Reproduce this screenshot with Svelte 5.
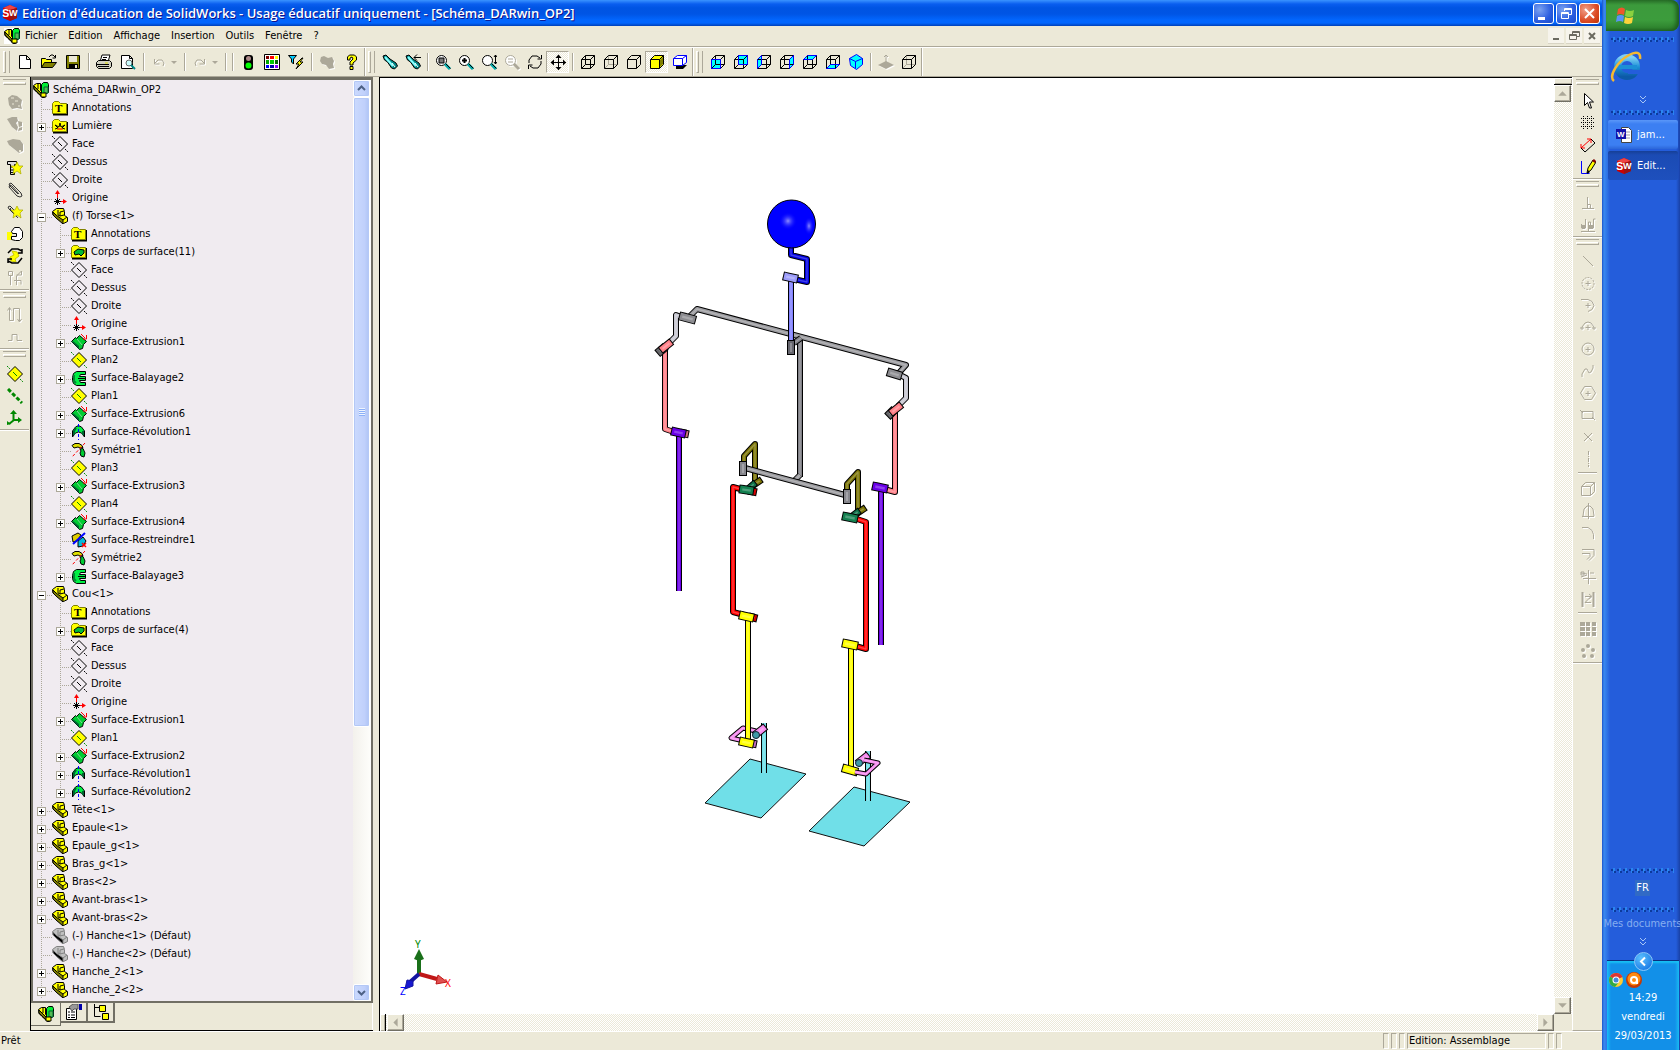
<script lang="ts">
	type Item = { label: string; icon: string; open?: boolean; children?: Item[]; expandable?: boolean };
	type Tool = { icon: string; label: string; off?: boolean; pressed?: boolean; sep?: boolean; drop?: boolean };
	type Tube = { c: string; w: number; p: string };

	const wire =
		'M1.5 5.5h9v9h-9zM5.5 1.5h9v9h-9zM1.5 5.5l4-4M10.5 5.5l4-4M10.5 14.5l4-4M1.5 14.5l4-4';
	const solid = 'M1.5 5.5h9v9h-9zM1.5 5.5l4-4h9v9l-4 4M10.5 5.5l4-4';
	const view = (face: string) =>
		`<path d="${face}" fill="#0ff"/><path d="${wire}" fill="none" stroke="#000"/><path d="${face}" fill="none" stroke="#00f"/>`;
	const lens = (inner: string, c = '#000', h = '#0aa') =>
		`<circle cx="6.5" cy="6.5" r="5" fill="#fff" stroke="${c}"/>${inner}<path d="M10 10l5 5" stroke="${h}" stroke-width="3"/><path d="M11 10l4.5 4.5" stroke="${c}"/>`;
	const plane = (fill: string, line: string) =>
		`<path d="M0 0l3 3M13 13l3 3" stroke="${line}" stroke-dasharray="2 1"/><path d="M8 .5L15.5 8L8 15.5L.5 8z" fill="${fill}" stroke="#000"/><path d="M6 6l4 4" stroke="${line}"/>`;
	const folder = (inner: string) =>
		`<path d="M1 14.5h14.5V4" fill="none" stroke="#000" stroke-width="2"/><path d="M.5 3.5l2-2h4l2 2h6v10H.5z" fill="#ff0" stroke="#808000"/>${inner}`;
	const torch = (extra: string) =>
		`<path d="M1 2l3-1 4 4 6 4 1.500 3-3 3-3-1-4-6-3-2z" fill="#088" stroke="#000"/><path d="M3 3l8 9" stroke="#8ff" stroke-width="2"/><path d="M10 9l3 4" stroke="#fff"/>${extra}`;
	const part = (a: string, b: string, k: string) =>
		`<path d="M.5 3.5l4-3h7l1 3v4l3 2v4l-4 2L4 9.5 1 6.5z" fill="${a}" stroke="${k}"/><path d="M1 4l3 3 7 5v4L4 10 1 7z" fill="${b}" stroke="${k}"/><path d="M6 2v5l2 1V4l4-1M8 8l4-1M11 12l4-3" fill="none" stroke="${k}"/>`;
	const assembly =
		'<path d="M.5 3.5l3-2h4v7l4 3v4h-2L4 10.5 1 7.5z" fill="#ff0" stroke="#000"/><path d="M1 4l2 2 7 7v2.5L4 10 1 7z" fill="#808000" stroke="#000"/><path d="M5 2v5" stroke="#000"/><path d="M8.5 2.5l2-2h4l1 2v8l-2 1h-5z" fill="#0e3" stroke="#000"/><path d="M11 5h4v6h-4z" fill="#5b5" stroke="#063"/><path d="M8 11h5v4H8z" fill="#ff0" stroke="#000"/>';
	const star =
		'<path d="M10 2l2 4h4l-3 3 1 5-4-3-4 3 1-5-3-3h4z" fill="#ff0" stroke="#aa0" stroke-width=".7"/>';
	const dim = (d: string, fill = 'none') => `<path d="${d}" fill="${fill}" stroke="#aca899"/>`;

	const icons: Record<string, string> = {
		sw: '<path d="M1 3l7-3 7 3v10l-7 3-7-3z" fill="#c00"/><path d="M8 0l7 3-7 2-7-2z" fill="#e44"/><path d="M8 5l7-2v10l-7 3z" fill="#911"/><text x="0" y="12" font-size="11" font-weight="700" font-family="Liberation Sans" fill="#fff">S</text><text x="7" y="11" font-size="9" font-weight="700" font-family="Liberation Sans" fill="#fff">W</text>',
		assembly,
		part: part('#ff0', '#808000', '#000'),
		partOff: part('#c0c0c0', '#000', '#808080'),
		note: folder('<text x="3" y="12" font-size="11" font-weight="700" font-family="Liberation Serif" fill="#000">T</text>'),
		light: folder('<path d="M3 11l3-1-3-3 4 2 1-4 1 4 4-2-3 3 3 1M4 8l2 2" fill="none" stroke="#000"/><path d="M5 12l1-2h4l1 2z" fill="#f60"/>'),
		bodies: folder('<path d="M3 8l4-3 6 1v3l-3 3-2-2-4 1z" fill="#0b3" stroke="#000"/>'),
		plane: plane('none', '#000'),
		plan: plane('#ff0', '#080'),
		origin: '<path d="M5.5 11V2M5 11.5h8" stroke="#f00"/><path d="M3 4l2.5-4L8 4zM11 9l4 2.5-4 2.5z" fill="#f00"/><path d="M3 9l5 5M8 9l-5 5M5.5 8v7M2 11.5h7" stroke="#000"/>',
		extrude: '<path d="M.5 7.5l4-4 1 1 3-3 7 6-3 3-1 4-3 1z" fill="#0c3" stroke="#000"/><path d="M1 8l7 7v-3L2 7z" fill="#063"/><path d="M6 5l5 6" stroke="#8c9"/><path d="M10 0l4 4M12 5h3.5V1" fill="none" stroke="#f00"/>',
		sweep: '<path d="M14.5 1.5H5.5l-3 2-1 4v3l1 3 3 2h9v-3h-5l-1-2h6v-4h-6l1-2h5z" fill="#0e4" stroke="#000"/><path d="M3 5v6l2 2" fill="none" stroke="#083" stroke-width="2"/><path d="M7 8.500h8" stroke="#000"/>',
		revolve: '<path d="M1.5 13V7l3-4 3-1.500 3 1.500 3 4v6l-3-4-3-1-3 1z" fill="#0e4" stroke="#000"/><path d="M3 11V7l2-3M12 11V7" fill="none" stroke="#063" stroke-width="2"/><path d="M7.5 0v16" stroke="#00f" stroke-dasharray="3 2"/>',
		mirror: '<path d="M1 3.5l3-2h4l3 2 1 2-3 .5-2-1-4 1z" fill="#dd0" stroke="#000"/><path d="M9 7l3-.5 2 4.500-1 4-3-1-1-3 1-2z" fill="#0c3" stroke="#000"/><path d="M14 1L1 15" stroke="#f00" stroke-dasharray="3 2"/>',
		trim: '<path d="M1 4l6-3 3 2-4 6-4 1z" fill="#dc0" stroke="#000"/><path d="M7 9l5-4 3 4-3 5-5 1z" fill="#0bd" stroke="#000"/><path d="M2 12L14 1" stroke="#00f" stroke-width="2"/><path d="M11 11l4 4M15 11l-4 4" stroke="#f00" stroke-width="1.5"/>',
		new: '<path d="M2.5 1.5h7l4 4v9h-11zM9.5 1.5v4h4" fill="#fff" stroke="#000"/>',
		open: '<path d="M.5 13.5v-9h4l1 1h5v3" fill="#ff0" stroke="#000"/><path d="M.5 13.5l3-5h12l-4 5z" fill="#808000" stroke="#000"/><path d="M8 3l2-2h2l2 2M14.5 1v3h-3" fill="none" stroke="#000"/>',
		save: '<path d="M1.5 1.5h13v13h-13z" fill="#808000" stroke="#000"/><path d="M4 2h8v6H4z" fill="#ece9d8"/><path d="M4 10h9v4H4z" fill="#000"/><path d="M10 11h2v3h-2z" fill="#ece9d8"/>',
		print: '<path d="M4 8l2-7h8l-2 7z" fill="#fff" stroke="#000"/><path d="M.5 8.5l2-2h11l2 2v4l-2 2h-11l-2-2z" fill="#d0d0c0" stroke="#000"/><path d="M1 10.5h12M2 12.5h11M7 3.5h4M6 5.5h4" stroke="#000"/><path d="M9 9h3" stroke="#dd0"/>',
		preview: '<path d="M1.5 1.5h8l3 3v10h-11zM9.5 1.5v3h3" fill="#fff" stroke="#000"/><circle cx="9" cy="9" r="3" fill="#cff" stroke="#666"/><path d="M11 11l4 4" stroke="#088" stroke-width="2"/>',
		undo: dim('M3.5 5v5h5M4 9l3-3h4l2 3-1 3'),
		redo: dim('M12.5 5v5h-5M12 9L9 6H5L3 9l1 3'),
		rebuild: '<rect x="4" y="1" width="9" height="15" rx="3" fill="#000"/><circle cx="8.5" cy="4.5" r="2.500" fill="#a88"/><circle cx="8.5" cy="11.5" r="3" fill="#0f0"/>',
		palette: '<path d="M.5.5h15v15H.5z" fill="#fff" stroke="#000"/><path d="M2 2h3v3H2z" fill="#800000"/><path d="M6 2h4v3H6z" fill="#f00"/><path d="M11 2h3v3h-3z" fill="#ff0"/><path d="M2 6h3v4H2z" fill="#0a0"/><path d="M6 6h4v4H6z" fill="#0c0"/><path d="M11 6h3v4h-3z" fill="#060"/><path d="M2 11h3v3H2z" fill="#00f"/><path d="M6 11h4v3H6z" fill="#00a"/><path d="M11 11h3v3h-3z" fill="#80f"/>',
		filter: '<path d="M.5 1.5h8L5.5 5v5l-2-2V5z" fill="#0cf" stroke="#000"/><path d="M14 4l-6 6h3l-3 5 7-7h-3l3-4z" fill="#ff0" stroke="#000"/>',
		blob: '<path d="M2 3l3-1 4 2 4-1 2 4-1 3 1 4-5 1-3-4-4-1-2-3z" fill="#aca899"/>',
		help: '<path d="M4.5 6V3l2-2h5l2 2v3L10 9v2H7V8l3-3-1-2-2 1v2z" fill="#ff0" stroke="#000"/><path d="M7 12.5h3v3H7z" fill="#ff0" stroke="#000"/>',
		torch: torch(''),
		torchBack: torch('<path d="M9 3.500h7M12 .5l-3 3 3 3" stroke="#000" fill="none"/>'),
		zoomFit: lens('<path d="M4 4h5v5H4z" fill="#777" stroke="#000"/>'),
		zoomArea: lens('<path d="M4 6.5h5M6.5 4v5" stroke="#000" stroke-width="2"/>'),
		zoomDrag: lens('<path d="M14.5 1v9M13 3l1.500-2L16 3M13 8l1.500 2L16 8" fill="none" stroke="#000"/>'),
		zoomSel: lens('<path d="M4 5h5M4 8h5" stroke="#aca899"/>', '#aca899', '#aca899'),
		rotate: '<path d="M2 9V6l3-4h5l3 2M14 7v3l-3 4H6l-3-2" fill="none" stroke="#000"/><path d="M14.5 1v4h-4M1.5 15v-4h4" fill="none" stroke="#000"/>',
		pan: '<path d="M8.5 1v15M1 8.5h15" stroke="#000"/><path d="M5.5 4l3-3.5 3 3.5zM5.5 13l3 3 3-3zM4 5.5L.5 8.5l3.500 3zM13 5.5l3 3-3 3z" fill="#000"/>',
		wire: `<path d="${wire}" fill="none" stroke="#000"/>`,
		hidden: `<path d="${wire}" fill="none" stroke="#aca899"/><path d="${solid}" fill="none" stroke="#000"/>`,
		solid: `<path d="${solid}" fill="none" stroke="#000"/>`,
		shaded: `<path d="${solid}" fill="#ff0" stroke="#000"/><path d="M11 6l3-3v7l-3 3z" fill="#808000"/>`,
		shadow: '<path d="M4 11h11l-4 4H4z" fill="#000"/><path d="M1.5 4.5l4-3h9v7l-4 3h-9z" fill="#fff" stroke="#00f"/><path d="M1.5 4.5h9v7M10.5 4.5l4-3" fill="none" stroke="#00f"/>',
		front: view('M1.5 5.5h9v9h-9z'),
		back: view('M5.5 1.5h9v9h-9z'),
		left: view('M1.5 5.5l4-4v9l-4 4z'),
		right: view('M10.5 5.5l4-4v9l-4 4z'),
		top: view('M1.5 5.5l4-4h9l-4 4z'),
		bottom: view('M1.5 14.5l4-4h9l-4 4z'),
		iso: '<path d="M1.5 4.5l7-4 6 4v6l-6 5-6-4z" fill="#0ff" stroke="#00f"/><path d="M1.5 4.5l6 3 7-3M7.5 7.5v7" fill="none" stroke="#00f"/>',
		normal: '<path d="M0 11l8-4 8 4-8 4z" fill="#aca899"/><path d="M8 8V1M6 3l2-2 2 2" fill="none" stroke="#aca899"/>',
		insert: '<path d="M1 4l4-3 5 1 5 4-1 5 1 4-5-1-5 1-3-4z" fill="#aca899"/><path d="M4 4h3M8 7h3M5 10h2M11 12h2" stroke="#ece9d8"/>',
		hideComp: '<path d="M0 3l5-2h5l1 4-2 2 2 4-1 4-5-4zM11 5l4 1v4l-3 1zM12 12l3-1v3l-4 1z" fill="#aca899"/>',
		editComp: '<path d="M0 3l6-2 7 1 3 4v7l-4 2L2 7z" fill="#aca899"/><path d="M12 12h2v2h-2z" fill="#ece9d8"/>',
		screw: '<path d="M.5 1.5h9v3h-2v10h-4v-10h-3zM3 7h5M3 10h5M3 12.5h5" fill="#ddd" stroke="#000"/>' + star,
		clip: '<path d="M11 12L3 4 2 2 4 1 14 11l1 3-2 1-3-1-8-9 1-2 2 1 7 8" fill="none" stroke="#333"/>',
		clipStar: '<path d="M10 13L2 5 1 3l2-1 8 8M5 3L3 5l8 9" fill="none" stroke="#333"/>' + star,
		move: '<path d="M0 6h5v8H0z" fill="#ff0"/><path d="M4.5 5.5l3-4h5l3 4v6l-3 3h-4l-4-1v-3h5v-3h-4z" fill="#fff" stroke="#000"/>',
		turn: '<path d="M5 3l5 1 2 4-4 3 1 3-5-1-1-4 4-2z" fill="#ff0" stroke="#cc0"/><path d="M1 5l4-4h6l4 2M15 1v4h-4M15 10l-4 5H5l-4-2M1 15v-4h4" fill="none" stroke="#000" stroke-width="1.500"/>',
		explode: dim('M1.5 1.5h4v4h-4zM3.5 5v10M9.5 15V6l5-5v4h-5M7 10.5h7v4'),
		smart: dim('M2.5 1v12.500h4v-12h6v13M.5 3.500l2-3 2 3M10.500 12l2 3 2-3'),
		pulse: dim('M1 11.5h4v-6h5v6h5'),
		axis: '<path d="M1 1l14 14" stroke="#080" stroke-width="3" stroke-dasharray="4 2"/>',
		coords: '<path d="M6.5 2v8h6M7 10l-5 4" fill="none" stroke="#080" stroke-width="2"/><path d="M3 4l3.500-4L10 4zM11 7l4 3-4 3zM0 15v-4l4 3z" fill="#080"/>',
		arrow: '<path d="M4.5.5v12l3-3 2 5.500h2l-2-6h4z" fill="#fff" stroke="#000"/>',
		grid: '<path d="M1 3.5h14M1 7.5h14M1 11.5h14M3.5 1v14M7.5 1v14M11.5 1v14" stroke="#000" stroke-dasharray="1 1"/>',
		dimension: '<path d="M1 11L11 2M1 7v4h4M7 2h4v4" fill="none" stroke="#f00"/><path d="M1 11l4 4L15 6l-4-4" fill="none" stroke="#000"/>',
		sketch: '<path d="M1.5 2v12.500h8" fill="none" stroke="#00f"/><path d="M7 14l1-5 5-8 3 2-5 8z" fill="#ff0" stroke="#000"/><path d="M12 2l3 2 1-2-2-2z" fill="#800"/><path d="M7 15l1-4 2 2z" fill="#000"/>',
		perp: dim('M2 13.5h12M7.5 2v11M7.5 9.5h3v4'),
		relations: dim('M5.500 2v9h-4V7M1 14.5h14M8.5 14V5h2v6h3V2h2') + '<path d="M2 8h3v4H2zM9 8h4v4H9z" fill="#aca899"/>',
		line: dim('M3 3l10 10'),
		arcDots: dim('M8 6v5M5.5 8.5h5') + '<circle cx="8" cy="8.5" r="6" fill="none" stroke="#aca899" stroke-dasharray="2 1"/>',
		tangent: dim('M1 2.5h7l4 2 2 4-2 4-4 2M8 6v5M5.5 8.5h5'),
		arc: dim('M2 11V8l3-4 3-1 3 1 3 4v3M8 6v5M5.5 8.5h5M0 9h4M12 9h4'),
		circle: '<circle cx="8" cy="8" r="6" fill="none" stroke="#aca899"/>' + dim('M8 6v5M5.5 8.5h5'),
		spline: dim('M2 14v-3l3-5 2 0 2 4 2-1 2-4V2'),
		hexagon: dim('M4.5 1.5h7l4 6.500-4 6.500h-7L.5 8zM8 6v5M5.5 8.5h5'),
		rect: dim('M2 4.5h11v7H2zM0 3l3 3M12 10l3 3'),
		point: dim('M4 4l8 8M12 4l-8 8'),
		center: '<path d="M8.5 0v16" stroke="#aca899" stroke-dasharray="4 1 1 1"/>',
		convert: dim(solid),
		revolved: dim('M8.5 0v16M2 13.5h12M3 13l1-7 3-3h3l3 3 1 7'),
		fillet: dim('M2 2.5h6l4 3 1.500 4V14'),
		offset: dim('M2 2.5h12v6l-5 5M2 6.5h8v3l-3 3'),
		cut: dim('M1 4l6 1M1 8l6-2M8.5 1v14M3 9.5h13M10 4h4M1 3h3v3H1z'),
		mirrorSk: '<path d="M2.500 1v15M13.500 1v15" stroke="#aca899" stroke-width="2"/>' + dim('M5 5.500h6l-6 6h6M9 3l3 2.500L9 8'),
		pattern: '<path d="M0 1h5v4H0zM6 1h4v4H6zM12 1h4v4h-4zM0 6h5v4H0zM6 6h4v4H6zM12 6h4v4h-4zM0 11h5v4H0zM6 11h4v4H6zM12 11h4v4h-4z" fill="#aca899"/>',
		circular: '<g fill="#aca899"><circle cx="8" cy="3" r="2"/><circle cx="3" cy="7" r="2"/><circle cx="13" cy="7" r="2"/><circle cx="4" cy="13" r="2"/><circle cx="12" cy="13" r="2"/></g>',
		props: '<path d="M.5 4.5h10v11H.5zM2 8h2M5 8h4M2 11h2M5 11h4M2 13.5h2M5 13.5h4" fill="#fff" stroke="#000"/><path d="M3 3l4-3h5v5H8L6 7z" fill="#999" stroke="#555"/><path d="M13 0h3v6h-3z" fill="#00a"/>',
		config: '<path d="M1.5 0v12.500h6M2 3.5h4" fill="none" stroke="#000"/><path d="M6.500 1.5h6v6h-6zM9.500 9.5h6v6h-6z" fill="#ff0" stroke="#000"/>',
		word: '<path d="M5.5.5h7l3 3v12h-10z" fill="#fff" stroke="#444"/><path d="M9 5h5M9 8h5M9 11h5" stroke="#99a"/><path d="M0 2h10v10H0z" fill="#11a"/><text x="1" y="10" font-size="8" font-weight="700" font-family="Liberation Sans" fill="#fff">W</text>'
	};

	const menus = ['Fichier', 'Edition', 'Affichage', 'Insertion', 'Outils', 'Fenêtre', '?'];

	const t = (icon: string, label: string, extra: Partial<Tool> = {}): Tool => ({ icon, label, ...extra });
	const sep = t('', '', { sep: true });
	const off = { off: true };

	const bars: Tool[][] = [
		[
			t('new', 'Nouveau'), t('open', 'Ouvrir'), t('save', 'Enregistrer'), sep,
			t('print', 'Imprimer'), t('preview', 'Aperçu'), sep,
			t('undo', 'Annuler', { off: true, drop: true }), sep,
			t('redo', 'Rétablir', { off: true, drop: true }), sep, sep,
			t('rebuild', 'Reconstruire'), t('palette', 'Couleur'), t('filter', 'Filtre'), sep,
			t('blob', 'Texture', off), t('help', 'Aide')
		],
		[
			t('torch', 'Orientation'), t('torchBack', 'Vue précédente'), sep,
			t('zoomFit', 'Zoom au mieux'), t('zoomArea', 'Zoom fenêtre'), t('zoomDrag', 'Zoom avant/arrière'),
			t('zoomSel', 'Zoom sur la sélection', off), t('rotate', 'Rotation'), t('pan', 'Translation', { pressed: true }), sep,
			t('wire', 'Image filaire'), t('hidden', 'Lignes cachées apparentes'), t('solid', 'Lignes cachées supprimées'),
			t('shaded', 'Image ombrée', { pressed: true }), t('shadow', 'Ombres')
		],
		[
			t('front', 'Face'), t('back', 'Arrière'), t('left', 'Gauche'), t('right', 'Droite'), t('top', 'Dessus'),
			t('bottom', 'Dessous'), t('iso', 'Isométrique'), sep, t('normal', 'Normal à', off), t('hidden', 'Dimétrique')
		]
	];

	const leftBars: Tool[][] = [
		[
			t('insert', 'Insérer des composants', off), t('hideComp', 'Cacher', off), t('editComp', 'Editer', off),
			t('screw', 'Visserie'), t('clip', 'Contrainte'), t('clipStar', 'Contraintes intelligentes'),
			t('move', 'Déplacer'), t('turn', 'Tourner'), t('explode', 'Vue éclatée', off)
		],
		[t('smart', 'Esquisse éclatée', off), t('pulse', 'Ligne décalée', off)],
		[t('plan', 'Plan'), t('axis', 'Axe'), t('coords', 'Système de coordonnées')]
	];

	const rightBars: Tool[][] = [
		[t('arrow', 'Sélectionner'), t('grid', 'Grille'), t('dimension', 'Cotation'), t('sketch', 'Esquisse')],
		[t('perp', 'Ajouter une relation', off), t('relations', 'Afficher les relations', off)],
		[
			t('line', 'Ligne', off), t('arcDots', 'Arc par son centre', off), t('tangent', 'Arc tangent', off),
			t('arc', 'Arc par 3 points', off), t('circle', 'Cercle', off), t('spline', 'Spline', off),
			t('hexagon', 'Polygone', off), t('rect', 'Rectangle', off), t('point', 'Point', off),
			t('center', 'Ligne de construction', off), sep,
			t('convert', 'Convertir', off), t('revolved', 'Symétrie', off), t('fillet', 'Congé', off),
			t('offset', 'Décaler', off), t('cut', 'Ajuster', off), t('mirrorSk', 'Miroir', off), sep,
			t('pattern', 'Répétition linéaire', off), t('circular', 'Répétition circulaire', off)
		]
	];

	const n = (label: string, icon: string, expandable = false): Item => ({ label, icon, expandable });
	const planes = () => [n('Face', 'plane'), n('Dessus', 'plane'), n('Droite', 'plane'), n('Origine', 'origin')];

	let tree: Item[] = $state([
		n('Annotations', 'note'),
		n('Lumière', 'light', true),
		...planes(),
		{
			label: '(f) Torse<1>', icon: 'part', expandable: true, open: true,
			children: [
				n('Annotations', 'note'), n('Corps de surface(11)', 'bodies', true), ...planes(),
				n('Surface-Extrusion1', 'extrude', true), n('Plan2', 'plan'),
				n('Surface-Balayage2', 'sweep', true), n('Plan1', 'plan'),
				n('Surface-Extrusion6', 'extrude', true), n('Surface-Révolution1', 'revolve', true),
				n('Symétrie1', 'mirror'), n('Plan3', 'plan'),
				n('Surface-Extrusion3', 'extrude', true), n('Plan4', 'plan'),
				n('Surface-Extrusion4', 'extrude', true), n('Surface-Restreindre1', 'trim'),
				n('Symétrie2', 'mirror'), n('Surface-Balayage3', 'sweep', true)
			]
		},
		{
			label: 'Cou<1>', icon: 'part', expandable: true, open: true,
			children: [
				n('Annotations', 'note'), n('Corps de surface(4)', 'bodies', true), ...planes(),
				n('Surface-Extrusion1', 'extrude', true), n('Plan1', 'plan'),
				n('Surface-Extrusion2', 'extrude', true), n('Surface-Révolution1', 'revolve', true),
				n('Surface-Révolution2', 'revolve', true)
			]
		},
		n('Tête<1>', 'part', true), n('Epaule<1>', 'part', true), n('Epaule_g<1>', 'part', true),
		n('Bras_g<1>', 'part', true), n('Bras<2>', 'part', true),
		n('Avant-bras<1>', 'part', true), n('Avant-bras<2>', 'part', true),
		n('(-) Hanche<1> (Défaut)', 'partOff'), n('(-) Hanche<2> (Défaut)', 'partOff'),
		n('Hanche_2<1>', 'part', true), n('Hanche_2<2>', 'part', true)
	]);

	const feet = ['750,759 806,774 761,818 705,803', '854,787 910,802 864,846 809,831'];

	// drawn back to front; widths of 5 and more are the joint cylinders
	const tubes: Tube[] = [
		// torso
		{ c: '#808086', w: 4, p: '800,338 800,477' },
		{ c: '#9a9a9e', w: 4, p: '688,318 697,309 906,365 898,374' },
		{ c: '#808086', w: 4, p: '801,338 794,343' },
		{ c: '#9a9a9e', w: 4, p: '800,475 794,481' },
		// neck and head
		{ c: '#0000e0', w: 4, p: '791,247 791,255 807,259 807,282 794,279' },
		{ c: '#8080ff', w: 4, p: '791,280 791,343' },
		{ c: '#9c9cfa', w: 7, p: '784,276 797,279' },
		{ c: '#66666e', w: 6, p: '791,341 791,354' },
		// left arm
		{ c: '#c6c6d0', w: 4, p: '684,318 676,315 676,336 667,345' },
		{ c: '#8c8c90', w: 7, p: '680,316 695,320' },
		{ c: '#ff8088', w: 4, p: '665,350 665,429 674,432' },
		{ c: '#66666a', w: 7, p: '665,347 658,353' },
		{ c: '#ff8088', w: 6, p: '671,342 661,350' },
		{ c: '#6a00e8', w: 4, p: '679,435 679,591' },
		{ c: '#d07080', w: 6, p: '682,433 687,434' },
		{ c: '#6a00e8', w: 7, p: '672,431 685,434' },
		// right arm
		{ c: '#c6c6d0', w: 4, p: '898,374 906,378 906,398 898,406' },
		{ c: '#8c8c90', w: 7, p: '888,372 901,376' },
		{ c: '#ff8088', w: 4, p: '895,410 895,492 884,489' },
		{ c: '#66666a', w: 7, p: '894,410 888,416' },
		{ c: '#ff8088', w: 6, p: '901,405 891,413' },
		{ c: '#6a00e8', w: 4, p: '881,490 881,645' },
		{ c: '#6a00e8', w: 7, p: '873,486 887,489' },
		// hips
		{ c: '#7b7405', w: 4, p: '755,484 755,444 744,456 744,465' },
		{ c: '#7b7405', w: 5, p: '752,486 761,480' },
		{ c: '#7b7405', w: 4, p: '858,512 858,472 847,484 847,494' },
		{ c: '#7b7405', w: 5, p: '856,514 865,508' },
		{ c: '#9a9a9e', w: 4, p: '745,468 845,495' },
		{ c: '#86868c', w: 6, p: '743,462 743,475' },
		{ c: '#86868c', w: 6, p: '847,490 847,503' },
		{ c: '#0e7048', w: 5, p: '748,489 755,483' },
		{ c: '#0e7048', w: 5, p: '851,517 859,511' },
		// legs
		{ c: '#f00', w: 4, p: '744,490 733,487 733,612 744,615' },
		{ c: '#d00000', w: 6, p: '750,491 755,492' },
		{ c: '#148050', w: 7, p: '740,489 753,491' },
		{ c: '#f00', w: 4, p: '854,518 866,522 866,649 852,645' },
		{ c: '#148050', w: 7, p: '843,516 857,519' },
		{ c: '#ff0', w: 4, p: '748,618 748,742' },
		{ c: '#d00000', w: 6, p: '751,617 755,618' },
		{ c: '#ff0', w: 7, p: '740,615 753,618' },
		{ c: '#ff0', w: 4, p: '851,646 851,769' },
		{ c: '#ff0', w: 7, p: '843,643 857,646' },
		// ankles
		{ c: '#70dfe8', w: 4, p: '764,723 764,773' },
		{ c: '#f78cf0', w: 3, p: '756,731 743,728 731,738 744,741' },
		{ c: '#ff0', w: 4, p: '748,724 748,742' },
		{ c: '#f78cf0', w: 6, p: '755,735 765,727' },
		{ c: '#c070c0', w: 6, p: '750,743 755,744' },
		{ c: '#ff0', w: 7, p: '740,741 753,744' },
		{ c: '#70dfe8', w: 4, p: '868,751 868,801' },
		{ c: '#ff0', w: 7, p: '843,768 857,772' },
		{ c: '#f78cf0', w: 6, p: '858,763 868,755' },
		{ c: '#f78cf0', w: 3, p: '855,772 866,774 878,763 864,760' }
	];

	// pull both ends of a cylinder in, so that its square caps end on the given points
	function body(tube: Tube) {
		if (tube.w < 5) return tube.p;
		const [x1, y1, x2, y2] = tube.p.split(/[ ,]/).map(Number);
		const length = Math.hypot(x2 - x1, y2 - y1);
		const cut = Math.min(tube.w / 2, length / 2 - 0.5) / length;
		const dx = (x2 - x1) * cut;
		const dy = (y2 - y1) * cut;
		return `${x1 + dx},${y1 + dy} ${x2 - dx},${y2 - dy}`;
	}
</script>

{#snippet icon(name: string)}
	<svg class="icon" viewBox="0 0 16 16" aria-hidden="true">{@html icons[name]}</svg>
{/snippet}

{#snippet toolbar(tools: Tool[], cls: string)}
	<div class="bar {cls}" role="toolbar">
		<span class="grip"></span>
		{#each tools as tool}
			{#if tool.sep}
				<span class="sep"></span>
			{:else}
				<button class="tool" class:off={tool.off} class:pressed={tool.pressed} class:drop={tool.drop} aria-label={tool.label}>
					{@render icon(tool.icon)}
					{#if tool.drop}<span class="caret"></span>{/if}
				</button>
			{/if}
		{/each}
	</div>
{/snippet}

{#snippet branch(items: Item[], depth: number)}
	{#each items as item, i}
		<li>
			<div class="row">
				{#if depth > 1}<span class="guide"></span>{/if}
				<span class="guide stub" class:last={depth > 1 && i === items.length - 1}>
					{#if item.expandable}
						<button class="toggle" class:open={item.open} aria-label="Développer {item.label}" onclick={() => (item.open = !item.open)}></button>
					{/if}
				</span>
				{@render icon(item.icon)}
				<span class="label">{item.label}</span>
			</div>
			{#if item.open && item.children}
				<ul>{@render branch(item.children, depth + 1)}</ul>
			{/if}
		</li>
	{/each}
{/snippet}

{#snippet chevrons()}
	<svg class="chevrons" viewBox="0 0 8 9" aria-hidden="true"><path d="M1 1l3 3 3-3M1 5l3 3 3-3" /></svg>
{/snippet}

<div class="desktop">
	<div class="window">
		<header class="title">
			{@render icon('sw')}
			<h1>Edition d'éducation de SolidWorks - Usage éducatif uniquement - [Schéma_DARwin_OP2]</h1>
			<button class="cap" aria-label="Réduire"><svg viewBox="0 0 19 19"><path d="M4 13h7v3H4z" fill="#fff" /></svg></button>
			<button class="cap" aria-label="Restaurer"><svg viewBox="0 0 19 19"><path d="M7.500 7V4.500h7v6H12M4.500 8.500h7v6h-7zM7 5.500h8M4 9.500h8" fill="none" stroke="#fff" /></svg></button>
			<button class="cap close" aria-label="Fermer"><svg viewBox="0 0 19 19"><path d="M5 5l9 9M14 5l-9 9" stroke="#fff" stroke-width="2" /></svg></button>
		</header>

		<nav class="menu">
			<span class="doc">{@render icon('assembly')}</span>
			{#each menus as menu}<button>{menu}</button>{/each}
			<span class="fill"></span>
			<button class="mdi" aria-label="Réduire le document"><svg viewBox="0 0 16 16"><path d="M5 10h6v2H5z" fill="#6b6a60" /></svg></button>
			<button class="mdi" aria-label="Restaurer le document"><svg viewBox="0 0 16 16"><path d="M6.500 6V3.500h7v5H11M6 4.500h8M3.500 6.500h7v5h-7zM3 7.500h8" fill="none" stroke="#6b6a60" /></svg></button>
			<button class="mdi" aria-label="Fermer le document"><svg viewBox="0 0 16 16"><path d="M5 5l6 6M11 5l-6 6" stroke="#6b6a60" stroke-width="2" /></svg></button>
		</nav>

		<div class="toolbars">
			{#each bars as bar}{@render toolbar(bar, 'h')}{/each}
		</div>

		<main>
			<aside class="side">
				{#each leftBars as bar}{@render toolbar(bar, 'v')}{/each}
			</aside>

			<section class="pane">
				<div class="tree-box">
					<div class="tree">
						<div class="row root">{@render icon('assembly')}<span class="label">Schéma_DARwin_OP2</span></div>
						<ul>{@render branch(tree, 1)}</ul>
					</div>
					<div class="xp-scroll">
						<button aria-label="Défiler vers le haut"><svg viewBox="0 0 15 15"><path d="M4 9l3.500-3.500L11 9" /></svg></button>
						<div class="track"><div class="thumb"></div></div>
						<button aria-label="Défiler vers le bas"><svg viewBox="0 0 15 15"><path d="M4 6l3.500 3.500L11 6" /></svg></button>
					</div>
				</div>
				<div class="tabs">
					<button class="active" aria-label="Arbre de création">{@render icon('assembly')}</button>
					<button aria-label="Propriétés">{@render icon('props')}</button>
					<button aria-label="Configurations">{@render icon('config')}</button>
				</div>
			</section>

			<section class="viewport">
				<svg class="scene" viewBox="380 78 1174 936" preserveAspectRatio="xMinYMin meet" role="img" aria-label="Schéma du robot">
					<defs>
						<radialGradient id="shine"><stop offset="0" stop-color="#8c8cff" /><stop offset="1" stop-color="#00f" stop-opacity="0" /></radialGradient>
					</defs>
					{#each feet as foot}<polygon points={foot} fill="#70dfe8" stroke="#111" />{/each}
					{#each tubes as tube}
						<g class:joint={tube.w >= 5}>
							<polyline points={body(tube)} stroke="#000" stroke-width={tube.w + 2} />
							<polyline points={body(tube)} stroke={tube.c} stroke-width={tube.w} />
							<polyline points={body(tube)} stroke="#fff" stroke-opacity=".25" stroke-width={tube.w / 3} />
						</g>
					{/each}
					<circle cx="756" cy="735" r="3.500" fill="#3f9aa6" stroke="#123" />
					<circle cx="859" cy="763" r="3.500" fill="#3f9aa6" stroke="#123" />
					<circle cx="791.500" cy="224" r="24" fill="#00f" stroke="#000" />
					<circle cx="788" cy="221" r="9" fill="url(#shine)" />
					<ellipse cx="809" cy="226" rx="5" ry="9" fill="url(#shine)" />

					<g class="triad">
						<path d="M419 974V956" stroke="#1a701a" stroke-width="4" />
						<path d="M414 959l5-10 5 10-5 2z" fill="#1a701a" />
						<path d="M419 974l18 5" stroke="#c01818" stroke-width="4" />
						<path d="M438 975l9 7-11 2z" fill="#e05050" stroke="#c01818" />
						<path d="M419 974l-9 8" stroke="#1414a0" stroke-width="4" />
						<path d="M407 980l6 1 0 5-8 3z" fill="#1818d0" stroke="#1414a0" />
						<text x="415" y="948" fill="#080">Y</text>
						<text x="445" y="987" fill="#f00">X</text>
						<text x="400" y="995" fill="#00f">Z</text>
					</g>
				</svg>
				<div class="scroll vert">
					<span class="split"></span>
					<button aria-label="Haut"><svg viewBox="0 0 14 14"><path d="M3 9l4-4 4 4z" /></svg></button>
					<span class="fill"></span>
					<button aria-label="Bas"><svg viewBox="0 0 14 14"><path d="M3 5l4 4 4-4z" /></svg></button>
				</div>
				<div class="scroll horiz">
					<span class="split"></span>
					<button aria-label="Gauche"><svg viewBox="0 0 14 14"><path d="M9 3L5 7l4 4z" /></svg></button>
					<span class="fill"></span>
					<button aria-label="Droite"><svg viewBox="0 0 14 14"><path d="M5 3l4 4-4 4z" /></svg></button>
				</div>
			</section>

			<aside class="side right">
				{#each rightBars as bar}{@render toolbar(bar, 'v')}{/each}
			</aside>
		</main>

		<footer>
			<span>Prêt</span>
			<span class="fill"></span>
			<span class="cell"></span><span class="cell"></span><span class="cell"></span>
			<span class="cell wide">Edition: Assemblage</span>
			<span class="cell"></span><span class="cell"></span>
		</footer>
	</div>

	<aside class="taskbar">
		<button class="start" aria-label="Démarrer">
			<svg viewBox="0 0 20 18">
				<path d="M2 2q4-3 7 0L8 8q-4-2-7 0z" fill="#f0562b" /><path d="M10 3q4 2 8 0l-1 6q-4 2-8 0z" fill="#8bd13f" />
				<path d="M1 9q4-2 7 0l-1 6q-3-2-7 0z" fill="#5b93f5" /><path d="M9 10q4 2 8 0l-1 6q-4 2-8 0z" fill="#fbd33a" />
			</svg>
		</button>
		<span class="dots"></span>
		<a class="ie" href="#ie" aria-label="Internet Explorer">
			<svg viewBox="0 0 32 32">
				<defs><linearGradient id="ieblue" x2="0" y2="1"><stop offset="0" stop-color="#7fd0f5" /><stop offset=".5" stop-color="#1c8fd6" /><stop offset="1" stop-color="#0c5aa8" /></linearGradient></defs>
				<circle cx="17" cy="16" r="9.500" fill="#245ddb" stroke="url(#ieblue)" stroke-width="7" />
				<path d="M9 14h18v4H9z" fill="#1c8fd6" />
				<path d="M18 19h14v4H18z" fill="#245ddb" />
				<path d="M4 30C-2 25 8 10 19 4c7-4 12-3 11 4" fill="none" stroke="#f4b932" stroke-width="2.500" />
			</svg>
		</a>
		{@render chevrons()}
		<span class="dots"></span>
		<button class="task">{@render icon('word')}<span>jam...</span></button>
		<button class="task current">{@render icon('sw')}<span>Edit...</span></button>
		<span class="fill"></span>
		<span class="dots"></span>
		<button class="lang">FR</button>
		<span class="dots"></span>
		<span class="docs">Mes documents</span>
		{@render chevrons()}
		<div class="tray">
			<button class="expand" aria-label="Afficher les icônes cachées"><svg viewBox="0 0 17 17"><path d="M10 4.500l-4 4 4 4" /></svg></button>
			<div class="tray-icons">
				<svg viewBox="0 0 16 16">
					<circle cx="8" cy="8" r="7" fill="#fc3" /><path d="M8 8L2 4.500A7 7 0 0 1 14.500 5z" fill="#d33" /><path d="M8 8L2 4.500A7 7 0 0 0 7 15l4-5z" fill="#3a4" />
					<circle cx="8" cy="8" r="3.500" fill="#fff" /><circle cx="8" cy="8" r="2.500" fill="#48d" />
				</svg>
				<svg viewBox="0 0 16 16">
					<circle cx="8" cy="8" r="8" fill="#c43a06" /><circle cx="8" cy="7" r="6.500" fill="#ff8a10" />
					<circle cx="8" cy="8" r="3" fill="none" stroke="#fff" stroke-width="2" /><path d="M11 7v5" stroke="#fff" stroke-width="2" />
				</svg>
			</div>
			<time>14:29</time>
			<span>vendredi</span>
			<span>29/03/2013</span>
		</div>
	</aside>
</div>

<style>
	:global(body) {
		overflow: hidden;
	}

	.desktop {
		display: flex;
		height: 100vh;
		font: 11px/14px 'DejaVu Sans Condensed', 'DejaVu Sans', sans-serif;
		color: #000;
		cursor: default;
	}

	button {
		font: inherit;
		color: inherit;
		padding: 0;
		margin: 0;
		border: 0;
		background: none;
	}

	svg {
		display: block;
	}

	.icon {
		width: 16px;
		height: 16px;
		flex: none;
	}

	.fill {
		flex: 1;
	}

	.window {
		flex: 1;
		min-width: 0;
		display: flex;
		flex-direction: column;
		background: #ece9d8;
	}

	/* title bar */
	.title {
		display: flex;
		align-items: center;
		gap: 2px;
		height: 26px;
		padding: 0 2px;
		background: linear-gradient(#3a93ff, #0a5eef 4px, #0054e3 8px, #0055e5 14px, #0266fe 20px, #0266fe 23px, #0040b8);
	}

	.title h1 {
		flex: 1;
		margin: 0;
		padding-left: 2px;
		font: 600 13px/20px 'Open Sans', 'Noto Sans', sans-serif;
		color: #fff;
		text-shadow: 1px 1px #0f1089;
		white-space: nowrap;
	}

	.cap {
		width: 21px;
		height: 21px;
		border: 1px solid #fff;
		border-radius: 3px;
		background: radial-gradient(circle at 30% 30%, #7ba2f0, #2a5de0 60%, #1c4bc8);
	}

	.cap svg {
		width: 19px;
		height: 19px;
	}

	.cap.close {
		background: radial-gradient(circle at 30% 30%, #f0a08a, #dc4a24 60%, #c03408);
	}

	/* menu */
	.menu {
		display: flex;
		align-items: center;
		height: 20px;
		padding: 0 2px 0 4px;
		border-bottom: 1px solid #aca899;
		box-shadow: 0 1px #fff;
	}

	.menu .doc {
		margin-right: 5px;
		background: #fff;
	}

	.menu button {
		margin-right: 11px;
	}

	.menu .mdi {
		width: 16px;
		height: 16px;
		margin: 0 0 0 2px;
		background: #f6f4ec;
		border-bottom: 1px solid #d8d4c4;
	}

	/* toolbars */
	.toolbars {
		display: flex;
		height: 29px;
		margin-top: 1px;
		border-bottom: 1px solid #aca899;
		box-sizing: border-box;
	}

	.bar {
		display: flex;
		align-items: center;
	}

	.bar.h {
		padding: 0 1px 0 3px;
		border-right: 1px solid #aca899;
		box-shadow: 1px 0 #fff;
	}

	.grip {
		flex: none;
		border: 1px solid;
		border-color: #fff #aca899 #aca899 #fff;
	}

	.h .grip {
		width: 1px;
		height: 20px;
		margin-right: 7px;
		box-shadow: 3px 0 #ece9d8, 4px 0 #aca899;
	}

	.v .grip {
		width: 21px;
		height: 1px;
		margin: 5px 0 6px;
		box-shadow: 0 -2px #ece9d8, 0 -3px #aca899;
	}

	.right .grip {
		margin-bottom: 5px;
	}

	.tool {
		display: flex;
		align-items: center;
		justify-content: center;
		width: 23px;
		height: 22px;
		box-sizing: border-box;
	}

	.h:first-child .tool {
		width: 24px;
	}

	.tool.off .icon {
		filter: drop-shadow(1px 1px 0 #fff);
	}

	.h:first-child .drop {
		width: 34px;
		gap: 4px;
	}

	.caret {
		border: 3px solid transparent;
		border-top-color: #aca899;
		border-bottom: 0;
	}

	.tool.pressed {
		border: 1px solid;
		border-color: #aca899 #fff #fff #aca899;
		background: repeating-conic-gradient(#ece9d8 0 25%, #fff 0 50%) 0 0 / 2px 2px;
	}

	.h .sep {
		width: 1px;
		height: 18px;
		margin: 0 3px;
		background: #aca899;
		box-shadow: 1px 0 #fff;
	}

	.v .sep {
		width: 19px;
		height: 1px;
		margin: 2px 0 5px;
		background: #aca899;
		box-shadow: 0 1px #fff;
	}

	.bar.v {
		flex-direction: column;
		border-bottom: 1px solid #aca899;
		box-shadow: 0 1px #fff;
	}

	main {
		flex: 1;
		min-height: 0;
		display: flex;
	}

	.side {
		width: 29px;
		flex: none;
	}

	.right {
		border-left: 1px solid #fff;
		border-bottom: 1px solid #aca899;
	}

	/* feature tree */
	.pane {
		display: flex;
		flex-direction: column;
		width: 343px;
		flex: none;
		margin: 0 5px 0 1px;
		border-left: 1px solid #000;
		border-bottom: 1px solid #000;
		box-sizing: border-box;
	}

	.tree-box {
		flex: 1;
		min-height: 0;
		display: flex;
		border: 2px solid #716f64;
		border-top: 3px solid #716f64;
		background: #f0ebf0;
	}

	.tree {
		flex: 1;
		overflow: hidden;
		padding-top: 1px;
	}

	ul {
		list-style: none;
		margin: 0;
		padding: 0;
	}

	.row {
		display: flex;
		align-items: center;
		height: 18px;
		white-space: nowrap;
	}

	.label {
		padding-left: 4px;
	}

	.guide {
		position: relative;
		width: 19px;
		height: 18px;
		flex: none;
		background: repeating-linear-gradient(#aca899 0 1px, transparent 1px 2px) 8px 0 / 1px 100% no-repeat;
	}

	.guide.last {
		background-size: 1px 10px;
	}

	.stub::before {
		content: '';
		position: absolute;
		left: 9px;
		right: 0;
		top: 10px;
		height: 1px;
		background: repeating-linear-gradient(90deg, transparent 0 1px, #aca899 1px 2px);
	}

	.toggle {
		position: absolute;
		left: 4px;
		top: 6px;
		width: 9px;
		height: 9px;
		box-sizing: border-box;
		border: 1px solid #aca899;
		background:
			linear-gradient(#000, #000) 1px 3px / 5px 1px no-repeat,
			linear-gradient(#000, #000) 3px 1px / 1px 5px no-repeat,
			#fff;
	}

	.toggle.open {
		background: linear-gradient(#000, #000) 1px 3px / 5px 1px no-repeat, #fff;
	}

	.xp-scroll {
		display: flex;
		flex-direction: column;
		width: 17px;
		padding-right: 1px;
		background: linear-gradient(90deg, #f3f1ec, #fefefb);
	}

	.xp-scroll button,
	.thumb {
		border: 1px solid #fff;
		border-radius: 2px;
		background: linear-gradient(90deg, #cbdafe, #c0d0fb 70%, #aec4f5);
		box-shadow: inset 0 0 0 1px #b4c8f6;
		box-sizing: border-box;
	}

	.xp-scroll button {
		height: 17px;
	}

	.xp-scroll svg {
		width: 15px;
		height: 15px;
		fill: none;
		stroke: #4d6185;
		stroke-width: 2;
	}

	.track {
		flex: 1;
	}

	.thumb {
		display: flex;
		align-items: center;
		justify-content: center;
		height: 71%;
	}

	.thumb::before {
		content: '';
		width: 6px;
		height: 8px;
		background: repeating-linear-gradient(#eef4fe 0 1px, #8cb0f8 1px 2px);
	}

	.tabs {
		display: flex;
		align-items: flex-start;
		height: 27px;
		border-right: 1px solid #fff;
	}

	.tabs button {
		display: flex;
		align-items: center;
		justify-content: center;
		width: 27px;
		height: 20px;
		border-right: 2px solid #716f64;
		border-bottom: 2px solid #716f64;
		box-sizing: border-box;
	}

	.tabs .active {
		width: 30px;
		height: 23px;
		background: #ece9d8;
		border-width: 0 1px 1px 0;
	}

	/* graphics area */
	.viewport {
		flex: 1;
		min-width: 0;
		display: grid;
		grid-template-columns: 1fr 18px;
		grid-template-rows: 1fr 17px;
		border-top: 1px solid #000;
		border-left: 1px solid #000;
		margin-left: 1px;
	}

	.scene {
		width: 100%;
		height: 100%;
		min-height: 0;
		background: #fff;
	}

	.scene polyline {
		fill: none;
		stroke-linejoin: round;
	}

	.joint polyline {
		stroke-linecap: square;
	}

	.triad text {
		font: 10px 'Noto Sans', sans-serif;
	}

	.scroll {
		display: flex;
		background: repeating-conic-gradient(#ece9d8 0 25%, #fff 0 50%) 0 0 / 2px 2px;
	}

	.vert {
		flex-direction: column;
	}

	.scroll button {
		width: 17px;
		height: 17px;
		flex: none;
		border: 1px solid;
		border-color: #fff #716f64 #716f64 #fff;
		background: #ece9d8;
		box-sizing: border-box;
		box-shadow: inset -1px -1px #aca899;
	}

	.scroll svg {
		width: 15px;
		height: 15px;
		fill: #aca899;
	}

	.split {
		background: #ece9d8;
		border: 0 solid #000;
		box-shadow: inset 1px 1px #fff, inset -1px -1px #aca899;
	}

	.vert .split {
		height: 6px;
		border-bottom-width: 1px;
	}

	.horiz .split {
		width: 5px;
		border-right-width: 1px;
		margin-right: 1px;
	}

	/* status bar */
	footer {
		display: flex;
		align-items: center;
		gap: 2px;
		height: 19px;
		padding: 0 40px 0 1px;
		border-top: 1px solid #fff;
		box-sizing: border-box;
	}

	.cell {
		width: 6px;
		height: 16px;
		border: 1px solid;
		border-color: #aca899 #fff #fff #aca899;
		box-sizing: border-box;
	}

	.cell.wide {
		width: 139px;
		padding-left: 1px;
	}

	/* taskbar */
	.taskbar {
		display: flex;
		flex-direction: column;
		align-items: center;
		width: 78px;
		flex: none;
		padding: 0 1px 0 4px;
		box-sizing: border-box;
		color: #fff;
		background: linear-gradient(90deg, #1c52c8, #3a8af0 2px, #2f74e6 5px, #245ddb 8px, #245ddb 74px, #1941a5);
	}

	.start {
		align-self: stretch;
		height: 31px;
		padding-left: 10px;
		border-radius: 0 8px 8px 0;
		background: linear-gradient(#2f7a2f, #3c9a3c 5px, #3c9c3c 20px, #2f842f 28px, #236a23);
		box-shadow: inset -3px 0 4px #1d5c1d;
	}

	.start svg {
		width: 20px;
		height: 18px;
	}

	.dots {
		width: 63px;
		height: 5px;
		margin-top: 6px;
		background:
			repeating-linear-gradient(90deg, #0c3a9c 0 2px, transparent 2px 6px) 0 1px / 100% 2px no-repeat,
			repeating-linear-gradient(90deg, transparent 0 3px, #0c3a9c 3px 5px, transparent 5px 6px) 0 3px / 100% 2px no-repeat,
			repeating-linear-gradient(90deg, transparent 0 2px, #2a86f0 2px 4px, transparent 4px 6px) 0 0 / 100% 100% no-repeat;
	}

	.ie {
		align-self: flex-start;
		margin: 9px 0 12px 4px;
	}

	.ie svg {
		width: 32px;
		height: 32px;
	}

	.chevrons {
		width: 8px;
		height: 9px;
		fill: none;
		stroke: #a9c6f5;
	}

	.task {
		display: flex;
		align-items: center;
		gap: 5px;
		align-self: stretch;
		height: 29px;
		margin: 5px 1px 0 2px;
		padding-left: 8px;
		border-radius: 2px;
		background: linear-gradient(#5a97f8, #3c7ff2 4px, #3c7ff2 25px, #2c66d8);
	}

	.task.current {
		margin-top: 2px;
		background: linear-gradient(#163f96, #1b4bb4 4px, #1e50bd);
	}

	.lang {
		padding: 1px;
		margin-top: 7px;
		height: 16px;
		background: #316ac5;
	}

	.lang + .dots {
		margin: 11px 0 5px;
	}

	.docs {
		margin: 0 -2px 6px;
		color: #86aef0;
		white-space: nowrap;
	}

	.tray {
		display: flex;
		flex-direction: column;
		align-items: center;
		align-self: stretch;
		gap: 5px;
		margin: 14px 0 0 1px;
		padding-bottom: 7px;
		border-top: 1px solid #0a2f80;
		background: linear-gradient(90deg, #18bbf8, #1290e8 4px, #1290e8 68px, #19b9f3);
		box-shadow: inset 0 2px 2px #18c0f4;
	}

	.expand {
		width: 19px;
		height: 19px;
		margin: -9px 0 -4px;
		border-radius: 50%;
		border: 1px solid #8ac6f8;
		background: radial-gradient(circle at 35% 30%, #5cc0ff, #0a6ae0);
		box-sizing: border-box;
	}

	.expand svg {
		width: 17px;
		height: 17px;
		fill: none;
		stroke: #fff;
		stroke-width: 2;
	}

	.tray-icons {
		display: flex;
		align-self: flex-start;
		gap: 2px;
		padding-left: 1px;
		margin-bottom: -2px;
	}

	.tray-icons svg {
		width: 16px;
		height: 16px;
	}
</style>
